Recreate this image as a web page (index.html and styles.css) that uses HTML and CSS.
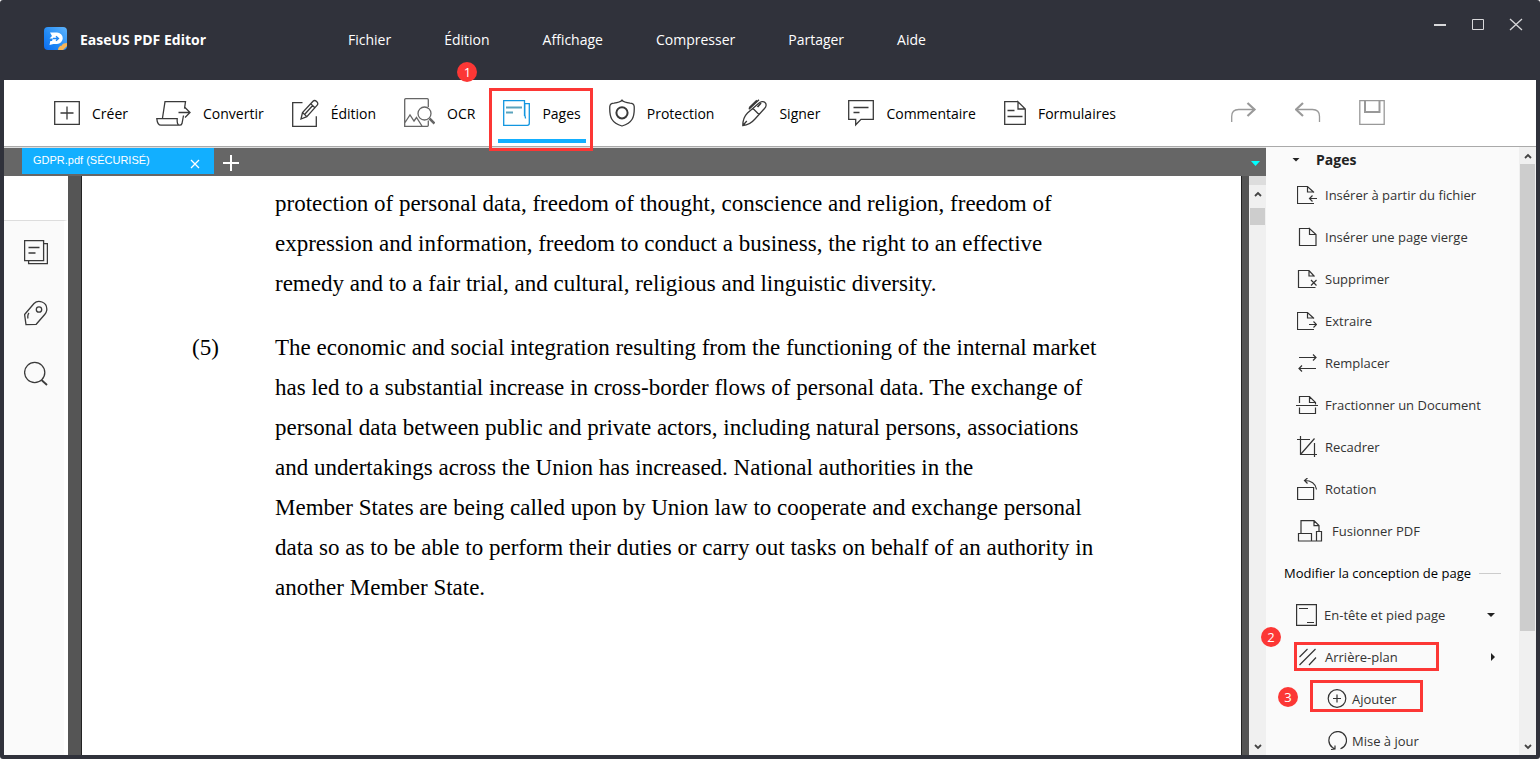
FILE: index.html
```html
<!DOCTYPE html>
<html lang="fr">
  <head>
    <meta charset="UTF-8" />
    <meta name="viewport" content="width=device-width, initial-scale=1.0" />
    <title>EaseUS PDF Editor</title>
    <link rel="stylesheet" href="styles.css">
  </head>
  <body>
    <div class="app">
      <header class="titlebar">
        <div class="brand">
          <svg class="logo" width="24" height="24" viewBox="0 0 24 24">
            <defs>
              <linearGradient id="logo-bg" x1="1" y1="0" x2="0" y2="1">
                <stop offset="0" stop-color="#5fb4fb" />
                <stop offset="0.6" stop-color="#2089f5" />
                <stop offset="1" stop-color="#0b6cf0" />
              </linearGradient>
            </defs>
            <rect x="0" y="0" width="23" height="23" rx="4" fill="url(#logo-bg)" />
            <path d="M6 5.500h7a5.500 5.500 0 0 1 0 11.500H9.500l-4 1 .8-4H8l1-2.500H5.500L8 9z" fill="#fff" />
            <path d="M9 11.500h4.500M12 9.300l2.500 2.200-2.500 2.200" fill="none" stroke="#1f86f3" stroke-width="1.300" />
            <path d="M14 23c0-3 2-4.500 4-4.500 0-1.500 1.500-2.500 5-2.500v3l-4 4z" fill="#f6b456" />
          </svg>
          <span>EaseUS PDF Editor</span>
        </div>
        <nav class="menu">
          <a href="#">Fichier</a>
          <a href="#">Édition</a>
          <a href="#">Affichage</a>
          <a href="#">Compresser</a>
          <a href="#">Partager</a>
          <a href="#">Aide</a>
        </nav>
        <div class="window-buttons">
          <button aria-label="Réduire">
            <svg width="14" height="14" viewBox="0 0 14 14"><path d="M1 7h12" stroke-width="2" /></svg>
          </button>
          <button aria-label="Agrandir">
            <svg width="14" height="14" viewBox="0 0 14 14"><path d="M1.500 1.500h11v10h-11z" /></svg>
          </button>
          <button aria-label="Fermer">
            <svg width="14" height="14" viewBox="0 0 14 14"><path d="M1 1l12 11M13 1L1 12" stroke-width="1.300" /></svg>
          </button>
        </div>
      </header>

      <div class="toolbar">
        <div class="tools">
          <button>
            <svg width="26" height="28" viewBox="0 0 26 28"><path d="M.7 2.700h24.600v22.600H.7zM13 7.500v13M6.500 14h13" /></svg>
            Créer
          </button>
          <button>
            <svg width="35" height="28" viewBox="0 0 35 28"><path d="M6.500 19L9 2.600h20.500l-1 7M27.500 16.500l-1.500 8c-.4 1.400-1.400 1.700-2.500 1.700M.8 19.600h20.400c-.3 3.500.3 6.600 2.300 6.600H5c-2.600 0-3.900-3.200-4.200-6.600zM22.500 13.500h11M29 8.500l5 5-5 5" /></svg>
            Convertir
          </button>
          <button>
            <svg width="27" height="28" viewBox="0 0 27 28"><path d="M10.500 3.700H.7v23.600h23.600v-10M9 20l1.500-6.500L21 2.300c2-2.200 6.300 1.400 4.200 3.800L14.800 17.600zM10.500 13.500l4.300 4.100M18.700 4.700l4.200 4M20.700 6.500L13 15" /></svg>
            Édition
          </button>
          <button>
            <svg class="soft" width="31" height="30" viewBox="0 0 31 30"><path d="M24.300 9V1.700a1 1 0 0 0-1-1H1.700a1 1 0 0 0-1 1v26.600h22.600a1 1 0 0 0 1-1V22.500M.7 25l5.300-8 4 6 2.500-3.500 5.500 8.500" /><circle cx="20.500" cy="15.500" r="6.500" /><path d="M25.500 20.500l5 5" stroke-width="2.500" /></svg>
            OCR
          </button>
          <button class="active">
            <svg width="27" height="28" viewBox="0 0 27 28"><path d="M21.500 17V1.700H.7v24.600h23.600a2 2 0 0 0 2-2V4.600h-4.500v11c0 1.500.7 2.500.7 4" /><path d="M3 8.500h16M3 13.500h7" stroke="#5aa3bd" stroke-width="1.800" /></svg>
            Pages
            <span class="highlight"></span>
            <span class="badge">1</span>
          </button>
          <button>
            <svg width="26" height="28" viewBox="0 0 26 28"><path d="M13 1.200c1.500 2 4 2.600 8 3 3 .2 4 1.300 4.200 3.300.5 11-2 16.500-12.200 19.500C2.800 24 .3 18.500.8 7.500 1 5.500 2 4.400 5 4.200c4-.4 6.500-1 8-3z" /><circle cx="13" cy="13.800" r="5.600" stroke-width="2" /></svg>
            Protection
          </button>
          <button>
            <svg width="25" height="28" viewBox="0 0 25 28"><path d="M.8 26.500C.8 21 2 17.500 5.500 14L16.500 4.500C18.500 2.500 21.500 2 23 3.500c1.600 1.500 1.500 4-.5 6L13 20c-3.200 3.700-6.500 6-12.200 6.500zM.8 26.500l4-4.500M11 9.500l6 6M17 .8L6.800 10.300" /><path d="M15 1.500L7.300 9M19 4l-3.500 4" stroke-width="1.800" /></svg>
            Signer
          </button>
          <button>
            <svg width="26" height="28" viewBox="0 0 26 28"><path d="M.7 1.700h24.600v18.600H13l-5.300 5.500v-5.500h-7zM5.500 8.500h15M5.500 13.500h6" /></svg>
            Commentaire
          </button>
          <button>
            <svg width="22" height="28" viewBox="0 0 22 28"><path d="M14 2.700H.7v22.600h20.600V10L14 2.700V10h7.300M3.500 11.500h7M3.500 17.500h15" /></svg>
            Formulaires
          </button>
        </div>
        <div class="actions">
          <button aria-label="Rétablir">
            <svg width="26" height="28" viewBox="0 0 26 28"><path d="M.7 23v-5.500q0-7 7-7H24" /><path d="M16.500 4l7 6.500-7 6.500" stroke-width="2.200" /></svg>
          </button>
          <button aria-label="Annuler">
            <svg width="26" height="28" viewBox="0 0 26 28"><path d="M24.500 23v-5.500q0-7-7-7H2" /><path d="M8 4l-7 6.500 7 6.500" stroke-width="2.200" /></svg>
          </button>
          <button aria-label="Enregistrer">
            <svg width="26" height="28" viewBox="0 0 26 28"><path d="M.8 1.700h24.400v23.600H.8z" /><path d="M6 1.700V13h14.500V1.700" stroke-width="2" /></svg>
          </button>
        </div>
      </div>

      <div class="workspace">
        <main class="viewer">
          <div class="tabs">
            <div class="tab">
              <a href="#">GDPR.pdf (SÉCURISÉ)</a>
              <button aria-label="Fermer l'onglet">
                <svg width="10" height="10" viewBox="0 0 10 10"><path d="M1 1l8 8M9 1L1 9" /></svg>
              </button>
            </div>
            <button class="new-tab" aria-label="Nouvel onglet">
              <svg width="16" height="16" viewBox="0 0 16 16"><path d="M8 0v16M0 8h16" stroke-width="2" /></svg>
            </button>
            <span class="caret-cyan"></span>
          </div>
          <div class="content">
            <aside class="side-tools">
              <button aria-label="Vignettes">
                <svg width="24" height="26" viewBox="0 0 24 26"><path d="M.6 1.600h19v20H.6zM19.600 4.600h3.800v20H4.600v-3M4.500 8.500h11M4.500 14h7" /></svg>
              </button>
              <button aria-label="Signets">
                <svg width="24" height="26" viewBox="0 0 24 26"><path d="M.6 14.500L10 3.500C12 1.500 15 .9 18 2c3.500 1.300 5.200 4.500 4.700 8.500-.2 1.500-1 2.800-2 4l-8.500 9.800L2 24.600zM5 13c-1.500 1.500-1.500 3-1 5.500" /><circle cx="15" cy="9.500" r="2.700" /></svg>
              </button>
              <button aria-label="Rechercher">
                <svg width="24" height="26" viewBox="0 0 24 26"><circle cx="10.700" cy="11.500" r="10.100" /><path d="M17.500 19l5.500 5" stroke-width="1.800" /></svg>
              </button>
            </aside>
            <div class="canvas">
              <article class="page">
                <p class="recital">
                  protection of personal data, freedom of thought, conscience and religion, freedom of<br>
                  expression and information, freedom to conduct a business, the right to an effective<br>
                  remedy and to a fair trial, and cultural, religious and linguistic diversity.
                </p>
                <span class="number">(5)</span>
                <p class="recital">
                  The economic and social integration resulting from the functioning of the internal market<br>
                  has led to a substantial increase in cross-border flows of personal data. The exchange of<br>
                  personal data between public and private actors, including natural persons, associations<br>
                  and undertakings across the Union has increased. National authorities in the<br>
                  Member States are being called upon by Union law to cooperate and exchange personal<br>
                  data so as to be able to perform their duties or carry out tasks on behalf of an authority in<br>
                  another Member State.
                </p>
              </article>
            </div>
            <div class="scrollbar doc-scroll">
              <span class="split"></span>
              <svg width="8" height="6" viewBox="0 0 8 6"><path d="M1 5l3-3 3 3" /></svg>
              <span class="thumb"></span>
              <svg class="down" width="8" height="6" viewBox="0 0 8 6"><path d="M1 1l3 3 3-3" /></svg>
            </div>
          </div>
        </main>

        <aside class="panel">
          <div class="panel-body">
            <h2><span class="caret-down"></span>Pages</h2>
            <ul>
              <li><button>
                <svg width="20" height="20" viewBox="0 0 20 20"><path d="M17 18.500H.5V1.500h10l6.500 6M10.500 1.500v5.500h6M20 13.500h-7.500M15.500 10.500l-3 3 3 3" /></svg>
                Insérer à partir du fichier
              </button></li>
              <li><button>
                <svg width="20" height="20" viewBox="0 0 20 20"><path d="M12.500 1.500h-10v17h16.500V7.500l-6.500-6V7.500H19" /></svg>
                Insérer une page vierge
              </button></li>
              <li><button>
                <svg width="20" height="20" viewBox="0 0 20 20"><path d="M18.500 18.500h-17V1.500h10.500l5.500 6M12 1.500v5.500h5.500M14 11l5.500 5.500M19.500 11L14 16.500" /></svg>
                Supprimer
              </button></li>
              <li><button>
                <svg width="20" height="20" viewBox="0 0 20 20"><path d="M17 18.500H.5V1.500h10l6.500 6M10.500 1.500v5.500h6M12 13.500h7.500M16.500 10.500l3 3-3 3" /></svg>
                Extraire
              </button></li>
              <li><button>
                <svg width="20" height="20" viewBox="0 0 20 20"><path d="M2 4.500h17M16 1.500l3 3-3 3M19 15.500H2M5 12.500l-3 3 3 3" /></svg>
                Remplacer
              </button></li>
              <li><button>
                <svg class="wide" width="22" height="20" viewBox="0 0 22 20"><path d="M3.500 8V1.500h10l6 6V9.500M13.500 1.500v6h6M0 10.500h22M3.500 12.500v6h16v-6" /></svg>
                Fractionner un Document
              </button></li>
              <li><button>
                <svg width="20" height="22" viewBox="0 0 20 22"><path d="M3.500 0v18.500H20M0 3.500h13M17.500 7v14M3.500 18.500l14-16" /></svg>
                Recadrer
              </button></li>
              <li><button>
                <svg width="20" height="22" viewBox="0 0 20 22"><path d="M.6 9.500h16v12H.6zM7.500 2.500c7 0 11 3 12 9M10.500 0l-3 2.500 3 3" /></svg>
                Rotation
              </button></li>
              <li><button>
                <svg width="27" height="22" viewBox="0 0 27 22"><path d="M4 13V.6h13l5 5V11M17 .6v5h5M1.500 13.500h13v7.500h-13zM19.500 11.500h5v9.500h-5zM14.500 21h5" /></svg>
                Fusionner PDF
              </button></li>
            </ul>
            <h3>Modifier la conception de page</h3>
            <ul>
              <li><button>
                <svg class="wide" width="21" height="22" viewBox="0 0 21 22"><path d="M.6 .6h19.800v20.800H.6zM3 4.500h9M11 18.500h7" /></svg>
                En-tête et pied page
                <span class="caret-down"></span>
              </button></li>
              <li class="background"><button>
                <svg width="20" height="20" viewBox="0 0 20 20"><path d="M2.500 10L10.500 2M2.500 18L18.500 2M12 18l7-7.500" /></svg>
                Arrière-plan
                <span class="caret-right"></span>
              </button>
                <span class="highlight"></span>
                <span class="badge">2</span>
              </li>
              <li class="sub add"><button>
                <svg width="20" height="20" viewBox="0 0 20 20"><circle cx="10" cy="9.500" r="8.800" /><path d="M10 5.500v8M6 9.500h8" /></svg>
                Ajouter
              </button>
                <span class="highlight"></span>
                <span class="badge">3</span>
              </li>
              <li class="sub"><button>
                <svg width="20" height="20" viewBox="0 0 20 20"><path d="M13.500 17.700A8.800 8.800 0 1 0 5.500 16.500l2.500 1.500M8 14.500v3.500l-4 .5" /></svg>
                Mise à jour
              </button></li>
            </ul>
          </div>
          <div class="scrollbar panel-scroll">
            <svg width="8" height="6" viewBox="0 0 8 6"><path d="M1 5l3-3 3 3" /></svg>
            <span class="thumb"></span>
            <svg class="down" width="8" height="6" viewBox="0 0 8 6"><path d="M1 1l3 3 3-3" /></svg>
          </div>
        </aside>
      </div>
    </div>
  </body>
</html>
```
FILE: styles.css
```css
* {
  box-sizing: border-box;
}

body {
  margin: 0;
  font-family: "Open Sans", "Noto Sans", sans-serif;
  font-size: 14px;
  color: #000;
  background: #fff;
}

button {
  margin: 0;
  padding: 0;
  border: none;
  background: none;
  font: inherit;
  color: inherit;
  cursor: pointer;
}

a {
  color: inherit;
  text-decoration: none;
}

ul {
  margin: 0;
  padding: 0;
  list-style: none;
}

svg {
  display: block;
  flex: none;
  fill: none;
  stroke: currentColor;
  stroke-width: 1.3;
}

.app {
  display: flex;
  flex-direction: column;
  height: 100vh;
  overflow: hidden;
  padding: 0 4px 4px;
  border-radius: 3px;
  background: #30323b;
}

/* title bar */

.titlebar {
  display: flex;
  flex: none;
  height: 80px;
  color: #fff;
}

.brand {
  display: flex;
  align-items: center;
  gap: 12px;
  width: 344px;
  padding: 0 0 2px 40px;
  font-weight: 700;
}

.logo {
  stroke: none;
}

.menu {
  display: flex;
  flex: 1;
  align-items: center;
  gap: 53px;
  padding-bottom: 2px;
}

.window-buttons {
  display: flex;
  gap: 24px;
  padding: 18px 13px 0 0;
  color: #d8d8da;
}

.window-buttons button {
  height: 14px;
}

.window-buttons svg {
  stroke-width: 1;
}

/* toolbar */

.toolbar {
  position: relative;
  z-index: 1;
  display: flex;
  flex: none;
  justify-content: space-between;
  height: 67px;
  padding: 0 151px 0 50px;
  border-bottom: 1px solid #aaa;
  background: #fff;
}

.tools,
.actions {
  display: flex;
  gap: 28px;
}

.tools button {
  position: relative;
  display: flex;
  align-items: center;
  gap: 12px;
}

.tools svg,
.side-tools svg {
  color: #3a3a3a;
}

.tools .soft {
  color: #666;
}

.tools .active svg {
  color: #1296e0;
}

.tools .active::after {
  content: "";
  position: absolute;
  left: -5px;
  right: -5px;
  bottom: 3px;
  height: 4px;
  background: #12afff;
}

.actions {
  gap: 38px;
  color: #999;
}

/* red marks */

.highlight {
  position: absolute;
  border: 3px solid #fc3735;
}

.badge {
  position: absolute;
  width: 20px;
  height: 20px;
  border-radius: 50%;
  font-size: 13px;
  line-height: 20px;
  text-align: center;
  color: #fff;
  background: #fc3735;
}

.active .highlight {
  inset: 8px -12px -5px -14px;
}

.active .badge {
  top: -18px;
  left: -46px;
}

.background .highlight {
  inset: 6px 80px 7px 18px;
}

.background .badge {
  top: -9px;
  left: -15px;
}

.add .highlight {
  inset: 2px 96px 8px 34px;
}

.add .badge {
  top: 9px;
  left: 2px;
}

/* document area */

.workspace {
  display: flex;
  flex: 1;
  min-height: 0;
  overflow: hidden;
  background: #fafafa;
}

.viewer {
  display: flex;
  flex: 1;
  flex-direction: column;
  min-width: 0;
}

.tabs {
  display: flex;
  flex: none;
  height: 29px;
  padding-left: 18px;
  border-top: 1px solid #ddd;
  background: #666;
  color: #fff;
}

.tab {
  display: flex;
  justify-content: space-between;
  width: 192px;
  height: 26px;
  padding: 0 14px 0 11px;
  background: #12afff;
  font-family: "Liberation Sans", Arial, sans-serif;
  font-size: 11px;
  line-height: 24px;
}

.tab button {
  padding-top: 5px;
}

.new-tab {
  padding: 2px 9px 0;
}

.caret-cyan {
  margin: 13px 6px 0 auto;
  width: 9px;
  height: 5px;
  background: #0ff;
  clip-path: polygon(0 0, 100% 0, 50% 100%);
}

.content {
  display: flex;
  flex: 1;
  min-height: 0;
}

.side-tools {
  display: flex;
  flex-direction: column;
  gap: 35px;
  width: 64px;
  padding: 18px 0 0 20px;
  margin-top: 44px;
  border-top: 1px solid #ddd;
  border-right: 4px solid #fff;
  box-shadow: 0 -44px #fff;
}

.side-tools button {
  width: 24px;
}

.canvas {
  flex: 1;
  min-width: 0;
  padding: 0 7px 0 13px;
  overflow: hidden;
  background: #555;
}

.page {
  display: grid;
  grid-template-columns: 83px 1fr;
  align-content: start;
  row-gap: 24px;
  height: 100%;
  padding: 8px 0 0 110px;
  border-left: 1px solid #222;
  border-right: 1px solid #222;
  background: #fff;
  font-family: "Liberation Serif", "Times New Roman", serif;
  font-size: 23px;
  line-height: 40px;
  white-space: nowrap;
}

.recital {
  grid-column: 2;
  margin: 0;
}

/* scrollbars */

.scrollbar {
  display: flex;
  flex: none;
  flex-direction: column;
  align-items: center;
  width: 17px;
  background: #f0f0f0;
  color: #444;
}

.scrollbar svg {
  stroke-width: 1.8;
}

.scrollbar .down {
  margin: auto 0 5px;
}

.thumb {
  width: 15px;
  background: #cdcdcd;
}

.split {
  width: 100%;
  height: 9px;
  margin-bottom: 6px;
  background: #ddd;
}

.doc-scroll .thumb {
  height: 17px;
  margin-top: 11px;
}

.panel-scroll {
  padding-top: 6px;
}

.panel-scroll .thumb {
  height: 467px;
  margin-top: 5px;
}

/* right panel */

.panel {
  display: flex;
  width: 270px;
}

.panel-body {
  flex: 1;
  min-width: 0;
  padding-left: 10px;
  color: #333;
  font-size: 13px;
}

.panel h2,
.panel h3 {
  display: flex;
  align-items: center;
  margin: 0;
  font-size: 13px;
  color: #222;
}

.panel h2 {
  gap: 16px;
  height: 27px;
  padding: 0 0 2px 16px;
  font-size: 14px;
}

.panel h3 {
  gap: 8px;
  height: 42px;
  padding-left: 8px;
  font-weight: 400;
  color: #000;
}

.panel h3::after {
  content: "";
  width: 22px;
  height: 1px;
  background: #ccc;
}

.panel li {
  position: relative;
  height: 42px;
  padding: 0 24px 0 21px;
}

.panel li button {
  display: flex;
  align-items: center;
  gap: 8px;
  width: 100%;
  height: 100%;
}

.panel li svg {
  stroke-width: 1.2;
}

.panel li .wide {
  margin: 0 -1px;
}

.panel .sub {
  padding-left: 51px;
}

.panel .sub button {
  gap: 5px;
}

.caret-down {
  width: 8px;
  height: 4px;
  background: #222;
  clip-path: polygon(0 0, 100% 0, 50% 100%);
}

.caret-right {
  width: 4px;
  height: 8px;
  background: #222;
  clip-path: polygon(0 0, 100% 50%, 0 100%);
}

li .caret-down,
li .caret-right {
  margin-left: auto;
}
```
